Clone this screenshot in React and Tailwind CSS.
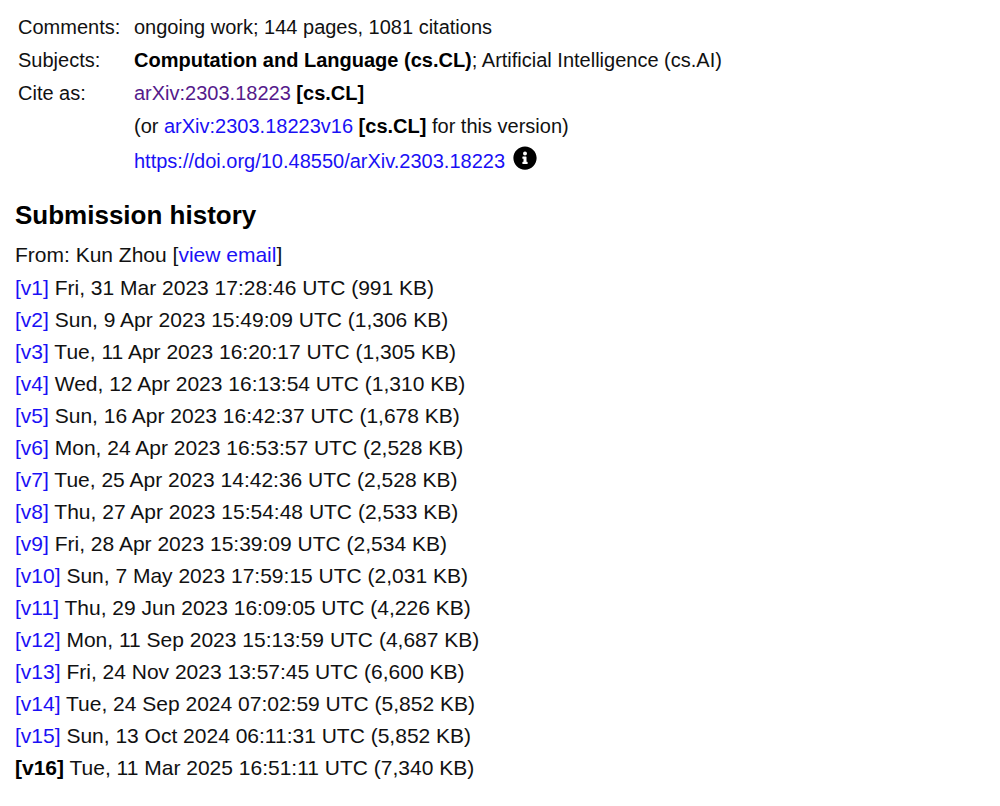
/**
 * Abstract page metadata and submission history
 */
const versions = [
  { id: 'v1', date: 'Fri, 31 Mar 2023 17:28:46 UTC', size: '991 KB' },
  { id: 'v2', date: 'Sun, 9 Apr 2023 15:49:09 UTC', size: '1,306 KB' },
  { id: 'v3', date: 'Tue, 11 Apr 2023 16:20:17 UTC', size: '1,305 KB' },
  { id: 'v4', date: 'Wed, 12 Apr 2023 16:13:54 UTC', size: '1,310 KB' },
  { id: 'v5', date: 'Sun, 16 Apr 2023 16:42:37 UTC', size: '1,678 KB' },
  { id: 'v6', date: 'Mon, 24 Apr 2023 16:53:57 UTC', size: '2,528 KB' },
  { id: 'v7', date: 'Tue, 25 Apr 2023 14:42:36 UTC', size: '2,528 KB' },
  { id: 'v8', date: 'Thu, 27 Apr 2023 15:54:48 UTC', size: '2,533 KB' },
  { id: 'v9', date: 'Fri, 28 Apr 2023 15:39:09 UTC', size: '2,534 KB' },
  { id: 'v10', date: 'Sun, 7 May 2023 17:59:15 UTC', size: '2,031 KB' },
  { id: 'v11', date: 'Thu, 29 Jun 2023 16:09:05 UTC', size: '4,226 KB' },
  { id: 'v12', date: 'Mon, 11 Sep 2023 15:13:59 UTC', size: '4,687 KB' },
  { id: 'v13', date: 'Fri, 24 Nov 2023 13:57:45 UTC', size: '6,600 KB' },
  { id: 'v14', date: 'Tue, 24 Sep 2024 07:02:59 UTC', size: '5,852 KB' },
  { id: 'v15', date: 'Sun, 13 Oct 2024 06:11:31 UTC', size: '5,852 KB' },
  { id: 'v16', date: 'Tue, 11 Mar 2025 16:51:11 UTC', size: '7,340 KB', current: true },
];

const InfoIcon = () => (
  <svg className="w-6 h-6" viewBox="0 0 512 512" fill="currentColor" aria-hidden="true">
    <path d="M256 8C119 8 8 119 8 256s111 248 248 248 248-111 248-248S393 8 256 8zm0 110a42 42 0 1 1 0 84 42 42 0 0 1 0-84zm56 254a12 12 0 0 1-12 12h-88a12 12 0 0 1-12-12v-24a12 12 0 0 1 12-12h12v-64h-12a12 12 0 0 1-12-12v-24a12 12 0 0 1 12-12h64a12 12 0 0 1 12 12v100h12a12 12 0 0 1 12 12v24z" />
  </svg>
);

const Metadata = () => (
  <table className="ml-[18px] text-[20px] leading-[33px]">
    <tbody>
      <tr>
        <th scope="row" className="w-[116px] text-left font-normal">Comments:</th>
        <td>ongoing work; 144 pages, 1081 citations</td>
      </tr>
      <tr>
        <th scope="row" className="text-left font-normal">Subjects:</th>
        <td><b className="text-black">Computation and Language (cs.CL)</b>; Artificial Intelligence (cs.AI)</td>
      </tr>
      <tr>
        <th scope="row" className="text-left font-normal">Cite as:</th>
        <td><a href="#abs" className="text-[#551a8b]">arXiv:2303.18223</a> <b className="text-black">[cs.CL]</b></td>
      </tr>
      <tr>
        <td></td>
        <td>(or <a href="#v16" className="text-[#1a10f5]">arXiv:2303.18223v16</a> <b className="text-black">[cs.CL]</b> for this version)</td>
      </tr>
      <tr>
        <td></td>
        <td>
          <div className="flex items-center gap-2 pt-0.5">
            <a href="#doi" className="text-[#1a10f5]">https://doi.org/10.48550/arXiv.2303.18223</a>
            <button type="button" aria-label="More about DOIs" className="pb-2 text-black"><InfoIcon /></button>
          </div>
        </td>
      </tr>
    </tbody>
  </table>
);

const SubmissionHistory = () => (
  <section className="ml-[15px] text-[21px] leading-8">
    <h2 className="mt-[19px] mb-1.5 text-[26px] leading-9 font-bold text-black">Submission history</h2>
    <p>From: Kun Zhou [<a href="#email" className="text-[#1a10f5]">view email</a>]</p>
    <ol className="mt-px">
      {versions.map(({ id, date, size, current }) => (
        <li key={id}>
          {current ? <b className="text-black">[{id}]</b> : <a href={`#${id}`} className="text-[#1a10f5]">[{id}]</a>} {date} ({size})
        </li>
      ))}
    </ol>
  </section>
);

const App = () => (
  <main className="min-h-screen bg-white pt-[11px] font-['Liberation_Sans',Arial,sans-serif] text-[#111111]">
    <Metadata />
    <SubmissionHistory />
  </main>
);

export default App;
